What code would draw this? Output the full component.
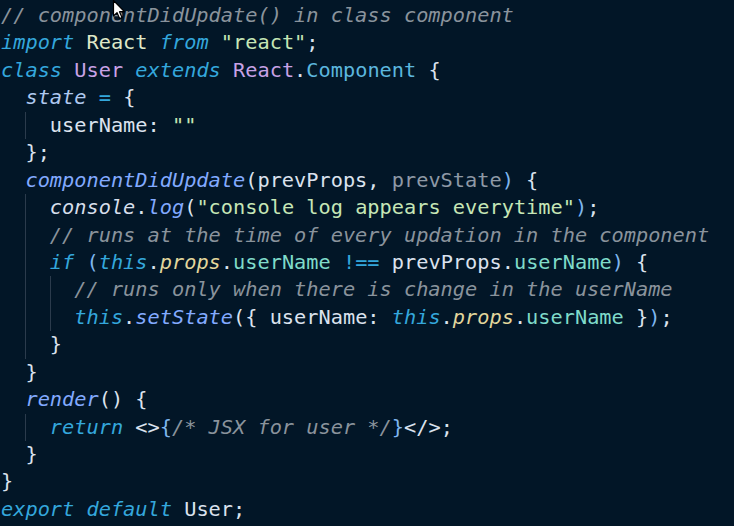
import React from "react";

type Tok = [string, string];

const C = {
  cm: "text-[#8a939c] italic",
  kw: "text-[#34a7dc] italic",
  op: "text-[#34a7dc]",
  imp: "text-[#dfe8c8]",
  str: "text-[#c6e6b6]",
  cls: "text-[#c8a2e6]",
  type: "text-[#5cb6de]",
  st: "text-[#aec8ef] italic",
  pl: "text-[#dbe2ee]",
  fn: "text-[#82aaff] italic",
  dim: "text-[#8e99a6]",
  con: "text-[#d6deeb] italic",
  pr: "text-[#e3d79c] italic",
  prop: "text-[#7fdbca]",
  par: "text-[#7fb6ef]",
};

const lines: { indent: number; toks: Tok[]; guides?: number[] }[] = [
  { indent: 0, toks: [["// componentDidUpdate() in class component", C.cm]] },
  {
    indent: 0,
    toks: [
      ["import", C.kw],
      [" ", C.pl],
      ["React", C.imp],
      [" ", C.pl],
      ["from", C.kw],
      [" ", C.pl],
      ['"react"', C.str],
      [";", C.pl],
    ],
  },
  {
    indent: 0,
    toks: [
      ["class", C.kw],
      [" ", C.pl],
      ["User", C.cls],
      [" ", C.pl],
      ["extends", C.kw],
      [" ", C.pl],
      ["React", C.cls],
      [".", C.pl],
      ["Component", C.type],
      [" {", C.pl],
    ],
  },
  { indent: 2, toks: [["state", C.st], [" ", C.pl], ["=", C.op], [" {", C.pl]] },
  { indent: 4, guides: [2], toks: [["userName", C.pl], [": ", C.pl], ['""', C.str]] },
  { indent: 2, toks: [["};", C.pl]] },
  {
    indent: 2,
    toks: [
      ["componentDidUpdate", C.fn],
      ["(", C.pl],
      ["prevProps", C.pl],
      [", ", C.pl],
      ["prevState", C.dim],
      [")", C.par],
      [" {", C.pl],
    ],
  },
  {
    indent: 4,
    guides: [2],
    toks: [
      ["console", C.con],
      [".", C.pl],
      ["log", C.fn],
      ["(", C.pl],
      ['"console log appears everytime"', C.str],
      [")", C.par],
      [";", C.pl],
    ],
  },
  {
    indent: 4,
    guides: [2],
    toks: [["// runs at the time of every updation in the component", C.cm]],
  },
  {
    indent: 4,
    guides: [2],
    toks: [
      ["if", C.kw],
      [" ", C.pl],
      ["(", C.par],
      ["this", C.kw],
      [".", C.pl],
      ["props", C.pr],
      [".", C.pl],
      ["userName", C.prop],
      [" ", C.pl],
      ["!==", C.op],
      [" ", C.pl],
      ["prevProps", C.pl],
      [".", C.pl],
      ["userName", C.prop],
      [")", C.par],
      [" {", C.pl],
    ],
  },
  {
    indent: 6,
    guides: [2, 4],
    toks: [["// runs only when there is change in the userName", C.cm]],
  },
  {
    indent: 6,
    guides: [2, 4],
    toks: [
      ["this", C.kw],
      [".", C.pl],
      ["setState", C.fn],
      ["(", C.pl],
      ["{ ", C.pl],
      ["userName", C.pl],
      [": ", C.pl],
      ["this", C.kw],
      [".", C.pl],
      ["props", C.pr],
      [".", C.pl],
      ["userName", C.prop],
      [" }", C.pl],
      [")", C.par],
      [";", C.pl],
    ],
  },
  { indent: 4, guides: [2], toks: [["}", C.pl]] },
  { indent: 2, toks: [["}", C.pl]] },
  { indent: 2, toks: [["render", C.fn], ["()", C.pl], [" {", C.pl]] },
  {
    indent: 4,
    guides: [2],
    toks: [
      ["return", C.kw],
      [" ", C.pl],
      ["<>", C.pl],
      ["{", C.par],
      ["/* JSX for user */", C.cm],
      ["}", C.par],
      ["</>", C.pl],
      [";", C.pl],
    ],
  },
  { indent: 2, toks: [["}", C.pl]] },
  { indent: 0, toks: [["}", C.pl]] },
  {
    indent: 0,
    toks: [
      ["export", C.kw],
      [" ", C.pl],
      ["default", C.kw],
      [" ", C.pl],
      ["User", C.pl],
      [";", C.pl],
    ],
  },
];

const CH = 12.22;

function Cursor() {
  return (
    <svg
      className="absolute left-[112px] top-[-1px]"
      width="16"
      height="22"
      viewBox="0 0 16 22"
    >
      <path
        d="M1.5 1.5 L1.5 17 L5 13.6 L7.6 19.6 L10 18.6 L7.5 12.7 L12.4 12.7 Z"
        fill="#ffffff"
        stroke="#000000"
        strokeWidth="1.2"
        strokeLinejoin="round"
      />
    </svg>
  );
}

export default function App() {
  return (
    <div className="relative w-[734px] h-[526px] overflow-hidden bg-[#021627]">
      <div
        className="pt-[2px] pl-[1px] text-[20.3px] leading-[27.45px] whitespace-pre"
        style={{ fontFamily: '"DejaVu Sans Mono", "Liberation Mono", monospace' }}
      >
        {lines.map((ln, i) => (
          <div key={i} className="relative h-[27.45px]">
            {(ln.guides ?? []).map((g) => (
              <span
                key={g}
                className="absolute top-0 bottom-0 w-px bg-[#2b3b4c]"
                style={{ left: g * CH }}
              />
            ))}
            <span>{" ".repeat(ln.indent)}</span>
            {ln.toks.map(([t, c], j) => (
              <span key={j} className={c}>
                {t}
              </span>
            ))}
          </div>
        ))}
      </div>
      <Cursor />
    </div>
  );
}
